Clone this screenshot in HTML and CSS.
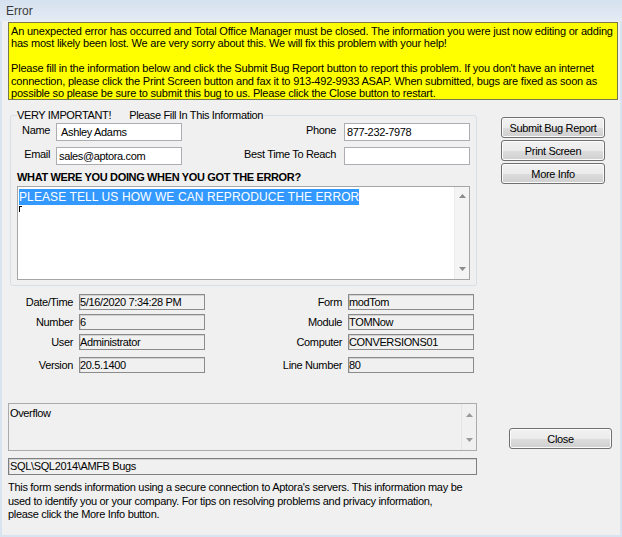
FILE: index.html
```html
<!DOCTYPE html>
<html lang="en">
<head>
    <meta charset="UTF-8">
    <meta name="viewport" content="width=device-width, initial-scale=1.0">
    <title>Error</title>
    <link rel="stylesheet" href="styles.css">
</head>
<body>

<div class="window">
    <div class="titlebar">Error</div>

    <div class="client">
        <!-- Yellow warning text -->
        <div class="notice">
            An unexpected error has occurred and Total Office Manager must be closed. The information you were just now editing or adding<br>
            has most likely been lost. We are very sorry about this. We will fix this problem with your help!<br>
            <br>
            Please fill in the information below and click the Submit Bug Report button to report this problem. If you don't have an internet<br>
            connection, please click the Print Screen button and fax it to 913-492-9933 ASAP. When submitted, bugs are fixed as soon as<br>
            possible so please be sure to submit this bug to us. Please click the Close button to restart.
        </div>

        <div class="main">
            <fieldset class="group">
                <legend><span>VERY IMPORTANT!</span><span class="legend-note">Please Fill In This Information</span></legend>

                <div class="contact">
                    <label class="lbl lbl-left" for="name">Name</label>
                    <input class="field" id="name" type="text" value=" Ashley Adams">
                    <label class="lbl lbl-right" for="phone">Phone</label>
                    <input class="field" id="phone" type="text" value="877-232-7978">

                    <label class="lbl lbl-left" for="email">Email</label>
                    <input class="field" id="email" type="text" value="sales@aptora.com">
                    <label class="lbl lbl-right" for="reach">Best Time To Reach</label>
                    <input class="field" id="reach" type="text" value="">
                </div>

                <div class="question">WHAT WERE YOU DOING WHEN YOU GOT THE ERROR?</div>

                <div class="memo">
                    <div class="memo-text">
                        <span class="selected">PLEASE TELL US HOW WE CAN REPRODUCE THE ERROR</span>
                        <span class="caret"></span>
                    </div>
                    <div class="scrollbar">
                        <svg width="7" height="4" viewBox="0 0 7 4"><polygon points="0,4 3.5,0 7,4" fill="#8c8c8c"/></svg>
                        <svg width="7" height="4" viewBox="0 0 7 4"><polygon points="0,0 7,0 3.5,4" fill="#8c8c8c"/></svg>
                    </div>
                </div>
            </fieldset>

            <div class="actions">
                <button class="btn">Submit Bug Report</button>
                <button class="btn">Print Screen</button>
                <button class="btn">More Info</button>
            </div>

            <!-- Error details -->
            <div class="details">
                <div class="detail-row">
                    <span class="dlabel">Date/Time</span><span class="dbox">5/16/2020 7:34:28 PM</span>
                    <span class="dlabel">Form</span><span class="dbox">modTom</span>
                </div>
                <div class="detail-row">
                    <span class="dlabel">Number</span><span class="dbox">6</span>
                    <span class="dlabel">Module</span><span class="dbox">TOMNow</span>
                </div>
                <div class="detail-row">
                    <span class="dlabel">User</span><span class="dbox">Administrator</span>
                    <span class="dlabel">Computer</span><span class="dbox">CONVERSIONS01</span>
                </div>
                <div class="detail-row spaced">
                    <span class="dlabel">Version</span><span class="dbox">20.5.1400</span>
                    <span class="dlabel">Line Number</span><span class="dbox">80</span>
                </div>
            </div>

            <div class="bottom">
                <div class="overflow">
                    <div class="overflow-text">Overflow</div>
                    <div class="scrollbar">
                        <svg width="7" height="4" viewBox="0 0 7 4"><polygon points="0,4 3.5,0 7,4" fill="#9a9a9a"/></svg>
                        <svg width="7" height="4" viewBox="0 0 7 4"><polygon points="0,0 7,0 3.5,4" fill="#9a9a9a"/></svg>
                    </div>
                </div>
                <div class="server">SQL\SQL2014\AMFB Bugs</div>
                <p class="footnote">
                    This form sends information using a secure connection to Aptora's servers. This information may be<br>
                    used to identify you or your company. For tips on resolving problems and privacy information,<br>
                    please click the More Info button.
                </p>
            </div>

            <div class="close-col">
                <button class="btn btn-close">Close</button>
            </div>
        </div>
    </div>
</div>

</body>
</html>
```

FILE: styles.css
```css
* {
    box-sizing: border-box;
}

html, body {
    margin: 0;
}

body {
    font-family: "Liberation Sans", Arial, sans-serif;
    font-size: 11px;
    letter-spacing: -0.35px;
    color: #000;
    background: #d9e4f1;
}

.window {
    width: 622px;
    height: 537px;
    display: flex;
    flex-direction: column;
    background: #d9e4f1;
}

.titlebar {
    height: 21px;
    padding: 4px 0 0 6px;
    font-size: 12px;
    letter-spacing: 0;
    color: #3b3b3b;
    background: linear-gradient(#d5e1ef, #e4ebf4);
}

.client {
    flex: 1;
    margin: 0 2px 2px;
    background: #f0f0f0;
}

/* Yellow warning */
.notice {
    height: 78px;
    margin: 1px 2px 0 6px;
    padding: 2px 2px 0;
    line-height: 12.4px;
    letter-spacing: -0.2px;
    white-space: nowrap;
    background: #ffff00;
    border: 1px solid #77774c;
}

.main {
    display: grid;
    grid-template-columns: 469px 111px;
    column-gap: 24px;
    align-items: start;
    padding-left: 6px;
}

/* Group box */
.group {
    grid-column: 1;
    min-width: 0;
    margin: 8px 0 0 2px;
    padding: 1px 6px 5px;
    border: 1px solid #d5dfe5;
    border-radius: 3px;
}

.group legend {
    padding: 0;
    line-height: 14px;
}

.legend-note {
    margin-left: 18px;
}

.contact {
    display: grid;
    grid-template-columns: 39px 126px 1fr 126px;
    row-gap: 6px;
}

.lbl {
    padding-top: 1px;
    line-height: 13px;
    text-align: right;
}

.lbl-left {
    padding-right: 6px;
}

.lbl-right {
    padding-right: 8px;
}

.field {
    width: 100%;
    height: 18px;
    margin: 0;
    padding: 0 2px;
    border: 1px solid #abadb3;
    background: #fff;
    font: inherit;
    letter-spacing: inherit;
    color: #000;
    outline: none;
}

.question {
    margin: 5px 0 2px;
    line-height: 14px;
    font-weight: bold;
    letter-spacing: -0.35px;
}

.memo {
    display: flex;
    height: 94px;
    border: 1px solid #a5a5a5;
    background: #fff;
}

.memo-text {
    flex: 1;
    padding: 2px 0 0 1px;
}

.selected {
    display: inline-block;
    font-size: 12px;
    line-height: 16px;
    letter-spacing: 0.1px;
    color: #fff;
    background: #3399ff;
}

.caret {
    display: block;
    width: 3px;
    height: 6px;
    margin-top: 1px;
    border-left: 1px solid #000;
    border-top: 1px solid #000;
}

.scrollbar {
    width: 15px;
    display: flex;
    flex-direction: column;
    justify-content: space-between;
    align-items: center;
    padding: 7px 0 8px;
    background: #f4f4f4;
    border-left: 1px solid #ececec;
}

.scrollbar svg {
    display: block;
}

/* Buttons */
.actions {
    grid-column: 2;
    display: flex;
    flex-direction: column;
    gap: 2px;
    margin-top: 17px;
}

.btn {
    display: block;
    width: 104px;
    height: 21px;
    padding: 0;
    border: 1px solid #707070;
    border-radius: 3px;
    background: linear-gradient(#f2f2f2 0%, #ebebeb 50%, #dddddd 51%, #cfcfcf 100%);
    box-shadow: inset 0 0 0 1px #fbfbfb;
    font: inherit;
    letter-spacing: inherit;
    color: #000;
}

/* Details */
.details {
    grid-column: 1;
    margin-top: 8px;
}

.detail-row {
    display: grid;
    grid-template-columns: 71px 126px 143px 126px;
    height: 16px;
}

.detail-row + .detail-row {
    margin-top: 4px;
}

.detail-row.spaced {
    margin-top: 7px;
}

.dlabel {
    padding-right: 6px;
    line-height: 16px;
    text-align: right;
}

.dbox {
    height: 16px;
    line-height: 14px;
    border: 1px solid #8b8b8b;
    box-shadow: inset 1px 1px 0 #d2d2d2;
    white-space: nowrap;
}

/* Bottom area */
.bottom {
    grid-column: 1;
    margin-top: 30px;
}

.overflow {
    display: flex;
    height: 48px;
    border: 1px solid #ababab;
}

.overflow-text {
    flex: 1;
    padding: 2px 0 0 1px;
    line-height: 14px;
}

.overflow .scrollbar {
    padding: 9px 0 8px;
    background: #f0f0f0;
    border-left: 1px solid #e4e4e4;
}

.server {
    height: 17px;
    margin-top: 7px;
    padding-left: 1px;
    line-height: 15px;
    border: 1px solid #7f7f7f;
    box-shadow: inset 1px 1px 0 #d2d2d2;
}

.footnote {
    margin: 6px 0 0;
    line-height: 13.5px;
    letter-spacing: -0.3px;
    white-space: nowrap;
}

.close-col {
    grid-column: 2;
    grid-row: 3;
}

.btn-close {
    width: 103px;
    margin: 55px 0 0 8px;
}
```
